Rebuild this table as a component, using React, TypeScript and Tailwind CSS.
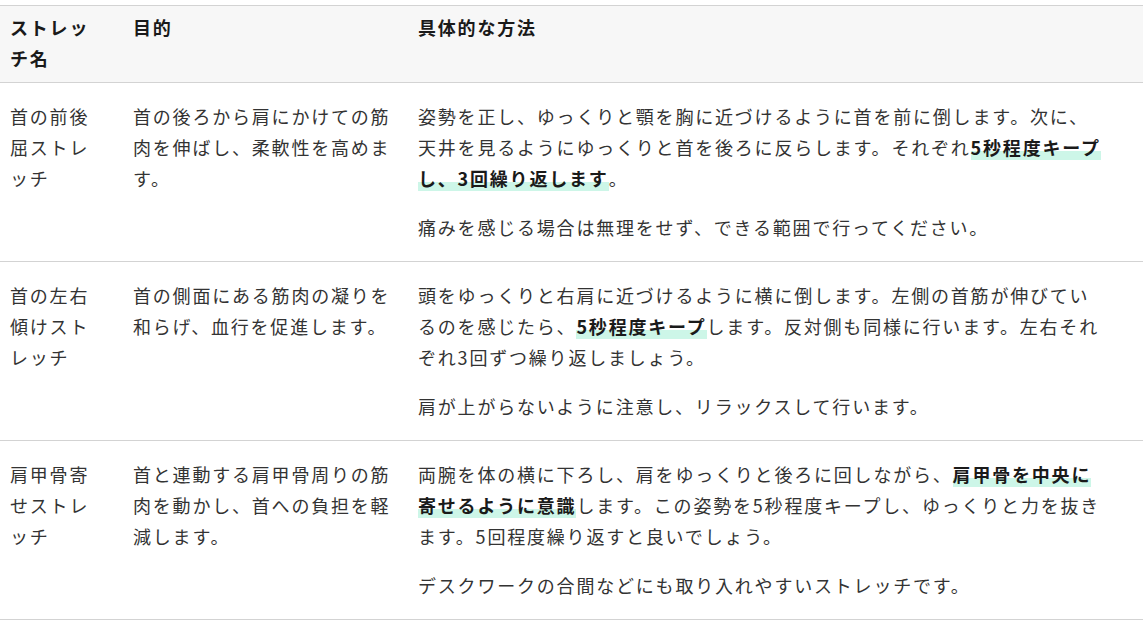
import React from "react";

type Row = {
  name: string;
  purpose: string;
  method: React.ReactNode;
  note: string;
};

const Mark = ({ children }: { children: React.ReactNode }) => (
  <strong className="font-bold text-[#1a1a1a] bg-[linear-gradient(transparent_66%,#cdf6e8_66%)]">
    {children}
  </strong>
);

const rows: Row[] = [
  {
    name: "首の前後屈ストレッチ",
    purpose: "首の後ろから肩にかけての筋肉を伸ばし、柔軟性を高めます。",
    method: (
      <>
        姿勢を正し、ゆっくりと顎を胸に近づけるように首を前に倒します。次に、天井を見るようにゆっくりと首を後ろに反らします。それぞれ
        <Mark>5秒程度キープし、3回繰り返します</Mark>。
      </>
    ),
    note: "痛みを感じる場合は無理をせず、できる範囲で行ってください。",
  },
  {
    name: "首の左右傾けストレッチ",
    purpose: "首の側面にある筋肉の凝りを和らげ、血行を促進します。",
    method: (
      <>
        頭をゆっくりと右肩に近づけるように横に倒します。左側の首筋が伸びているのを感じたら、
        <Mark>5秒程度キープ</Mark>
        します。反対側も同様に行います。左右それぞれ3回ずつ繰り返しましょう。
      </>
    ),
    note: "肩が上がらないように注意し、リラックスして行います。",
  },
  {
    name: "肩甲骨寄せストレッチ",
    purpose: "首と連動する肩甲骨周りの筋肉を動かし、首への負担を軽減します。",
    method: (
      <>
        両腕を体の横に下ろし、肩をゆっくりと後ろに回しながら、
        <Mark>肩甲骨を中央に寄せるように意識</Mark>
        します。この姿勢を5秒程度キープし、ゆっくりと力を抜きます。5回程度繰り返すと良いでしょう。
      </>
    ),
    note: "デスクワークの合間などにも取り入れやすいストレッチです。",
  },
];

export default function App() {
  return (
    <div className="min-h-screen bg-white pt-[5px] font-['Noto_Sans_CJK_JP','Noto_Sans',sans-serif] text-[18px] leading-[31px] tracking-[0.1em] text-[#333]">
      <table className="w-full table-fixed border-collapse text-left">
        <colgroup>
          <col className="w-[123px]" />
          <col className="w-[285px]" />
          <col />
        </colgroup>
        <thead>
          <tr className="bg-[#f7f7f7] border-y border-[#d3d3d3]">
            <th className="pl-[10px] pr-[30px] pt-[6px] pb-[8px] align-top font-bold text-[#1a1a1a]">
              ストレッチ名
            </th>
            <th className="px-[10px] pt-[6px] pb-[8px] align-top font-bold text-[#1a1a1a]">
              目的
            </th>
            <th className="pl-[10px] pr-[36px] pt-[6px] pb-[8px] align-top font-bold text-[#1a1a1a]">
              具体的な方法
            </th>
          </tr>
        </thead>
        <tbody>
          {rows.map((row) => (
            <tr key={row.name} className="border-b border-[#d3d3d3]">
              <td className="pl-[10px] pr-[30px] py-[18px] align-top">{row.name}</td>
              <td className="px-[10px] py-[18px] align-top">{row.purpose}</td>
              <td className="pl-[10px] pr-[36px] py-[18px] align-top">
                <p>{row.method}</p>
                <p className="mt-[18px]">{row.note}</p>
              </td>
            </tr>
          ))}
        </tbody>
      </table>
    </div>
  );
}
